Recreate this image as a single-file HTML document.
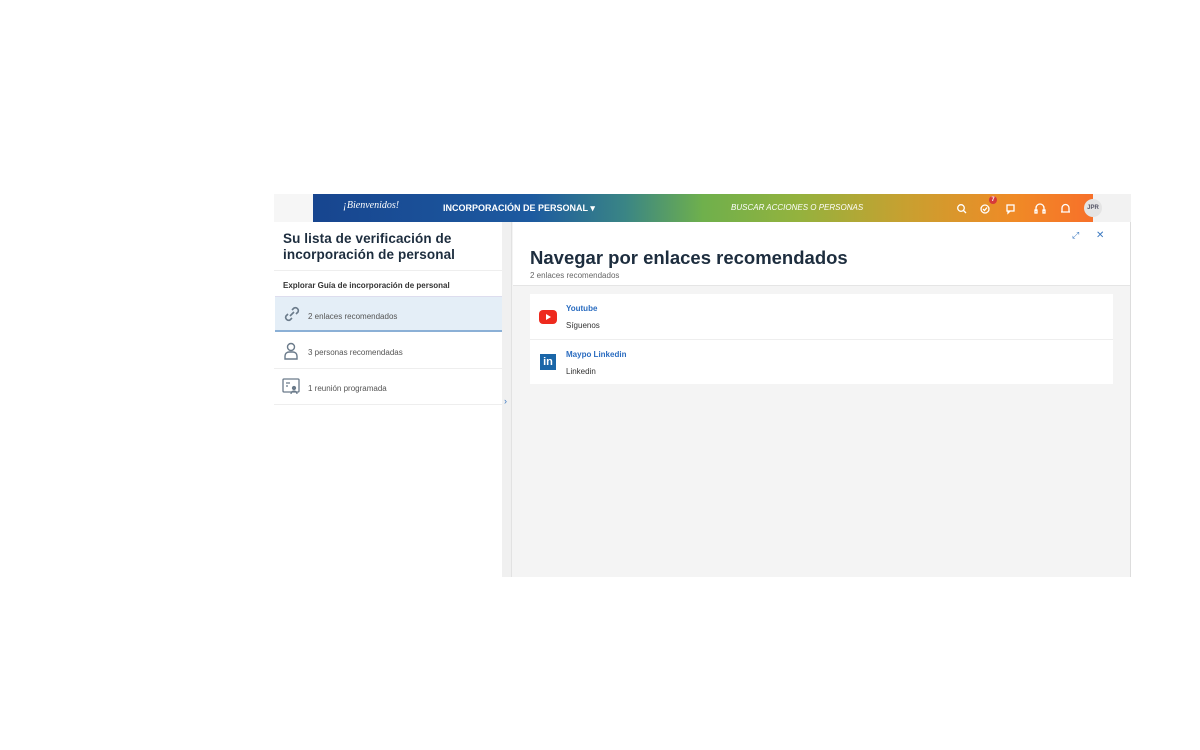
<!DOCTYPE html>
<html><head><meta charset="utf-8"><style>
*{margin:0;padding:0;box-sizing:border-box}
body{width:1200px;height:750px;background:#fff;font-family:"Liberation Sans",sans-serif;position:relative;overflow:hidden}
.abs{position:absolute}
.hdr{left:313px;top:194px;width:780px;height:28px;background:linear-gradient(90deg,#17458f 0%,#1d5aa0 28%,#3a8585 40%,#6fb04c 50%,#93b23e 62%,#c8a030 76%,#f08a26 90%,#f7702a 100%)}
.t{color:#fff;font-size:9px;font-weight:bold}
</style></head><body>
<div class="abs" style="left:274px;top:194px;width:857px;height:383px;background:#f4f4f4;border-right:1px solid #ddd"></div>
<div class="abs" style="left:274px;top:194px;width:39px;height:28px;background:#f6f6f6"></div>
<div class="abs" style="left:1093px;top:194px;width:38px;height:28px;background:#f2f2f2"></div>
<div class="abs hdr"></div>
<div class="abs" style="left:343px;top:200px;color:#fff;font-size:10px;font-style:italic;font-family:'Liberation Serif',serif">¡Bienvenidos!</div>
<div class="abs t" style="left:443px;top:203px">INCORPORACIÓN DE PERSONAL ▾</div>
<div class="abs" style="left:731px;top:203px;color:#fff;font-size:8px;font-style:italic">BUSCAR ACCIONES O PERSONAS</div>
<svg class="abs" style="left:955px;top:202px" width="120" height="14" fill="none" stroke="#fff" stroke-width="1.3">
<circle cx="6" cy="6" r="3.3"/><path d="M8.5 8.5l2.5 2.5"/>
<circle cx="30" cy="7" r="4"/><path d="M28 7l1.5 1.5 2.5-3"/>
<rect x="52" y="3" width="7" height="6"/><path d="M53 9v2l2-2"/>
<path d="M81 9v-3a4 4 0 018 0v3"/><rect x="80" y="8" width="2" height="3"/><rect x="88" y="8" width="2" height="3"/>
<path d="M107 10v-4a3.5 3.5 0 017 0v4h1h-9z"/>
</svg>
<div class="abs" style="left:989px;top:196px;width:8px;height:8px;border-radius:50%;background:#d63a3a;color:#fff;font-size:6px;text-align:center;line-height:8px;font-weight:bold">7</div>
<div class="abs" style="left:1084px;top:199px;width:18px;height:18px;border-radius:50%;background:#e4e4e4;color:#556;font-size:6px;font-weight:bold;text-align:center;line-height:18px">JPR</div>

<div class="abs" style="left:274px;top:222px;width:228px;height:355px;background:#fff"></div>
<div class="abs" style="left:283px;top:231px;font-size:13.5px;font-weight:bold;color:#1d2d3e;line-height:16px;letter-spacing:0.1px">Su lista de verificación de<br>incorporación de personal</div>
<div class="abs" style="left:274px;top:270px;width:228px;border-top:1px solid #eee"></div>
<div class="abs" style="left:283px;top:281px;font-size:8px;font-weight:bold;color:#333">Explorar Guía de incorporación de personal</div>
<div class="abs" style="left:275px;top:296px;width:227px;height:36px;background:#e4eef7;border-bottom:2px solid #8bb0d6;border-top:1px solid #dde"></div>
<svg class="abs" style="left:282px;top:304px" width="20" height="20" fill="none" stroke="#6a7a8a" stroke-width="1.6"><path d="M8 12l4-4M6 10l-2 2a3 3 0 004 4l2-2M14 10l2-2a3 3 0 00-4-4l-2 2"/></svg>
<div class="abs" style="left:308px;top:312px;font-size:8px;color:#555">2 enlaces recomendados</div>
<svg class="abs" style="left:283px;top:342px" width="16" height="18" fill="none" stroke="#6a7a8a" stroke-width="1.4"><circle cx="8" cy="5" r="3.5"/><path d="M2 17v-3a4 4 0 014-4h4a4 4 0 014 4v3z"/></svg>
<div class="abs" style="left:308px;top:348px;font-size:8px;color:#555">3 personas recomendadas</div>
<div class="abs" style="left:274px;top:368px;width:228px;border-top:1px solid #eee"></div>
<svg class="abs" style="left:282px;top:378px" width="20" height="18" fill="none" stroke="#6a7a8a" stroke-width="1.3"><rect x="1" y="1" width="16" height="13" rx="1"/><path d="M4 5h4M4 8h2"/><circle cx="12" cy="10" r="1.5" fill="#6a7a8a"/><path d="M9 16a3 3 0 016 0"/></svg>
<div class="abs" style="left:308px;top:384px;font-size:8px;color:#555">1 reunión programada</div>
<div class="abs" style="left:274px;top:404px;width:228px;border-top:1px solid #eee"></div>
<div class="abs" style="left:502px;top:222px;width:10px;height:355px;background:#f0f0f0;border-right:1px solid #e2e2e2"></div>
<div class="abs" style="left:504px;top:396px;color:#3a78c0;font-size:9px">›</div>

<div class="abs" style="left:513px;top:222px;width:617px;height:64px;background:#fff;border-bottom:1px solid #e5e5e5"></div>
<div class="abs" style="left:530px;top:247px;font-size:18.5px;font-weight:bold;color:#1d2d3e">Navegar por enlaces recomendados</div>
<div class="abs" style="left:530px;top:271px;font-size:8px;color:#666">2 enlaces recomendados</div>
<div class="abs" style="left:1072px;top:230px;color:#3a78c0;font-size:9px">⤢</div>
<div class="abs" style="left:1096px;top:230px;color:#3a78c0;font-size:10px">✕</div>

<div class="abs" style="left:530px;top:294px;width:583px;height:90px;background:#fff"></div>
<div class="abs" style="left:530px;top:339px;width:583px;border-top:1px solid #eee"></div>
<div class="abs" style="left:539px;top:310px;width:18px;height:14px;border-radius:4px;background:#ee2a1e"></div>
<div class="abs" style="left:546px;top:314px;width:0;height:0;border-left:5px solid #fff;border-top:3px solid transparent;border-bottom:3px solid transparent"></div>
<div class="abs" style="left:566px;top:304px;font-size:8px;font-weight:bold;color:#2a6cc0">Youtube</div>
<div class="abs" style="left:566px;top:321px;font-size:8px;color:#333">Síguenos</div>
<div class="abs" style="left:540px;top:354px;width:16px;height:16px;background:#1a66a8;color:#fff;font-size:11px;font-weight:bold;text-align:center;line-height:16px">in</div>
<div class="abs" style="left:566px;top:350px;font-size:8px;font-weight:bold;color:#2a6cc0">Maypo Linkedin</div>
<div class="abs" style="left:566px;top:367px;font-size:8px;color:#333">Linkedin</div>
</body></html>
